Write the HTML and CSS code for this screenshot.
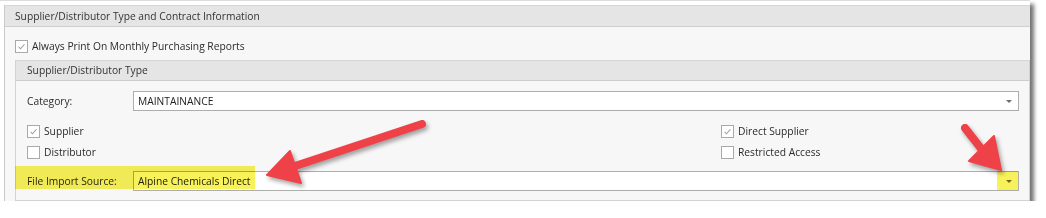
FILE: index.html
```html
<!DOCTYPE html>
<html>
<head>
<meta charset="utf-8">
<link rel="stylesheet" href="styles.css">
</head>
<body>
<div class="shot">
  <div class="topline"></div>
  <div class="panel">
    <div class="panel-head">Supplier/Distributor Type and Contract Information</div>
    <div class="panel-body">
      <div class="chk-row top-chk">
        <span class="chk checked"><svg viewBox="0 0 13 13"><path d="M3 6.8 L5.3 9.2 L10 3.8" fill="none" stroke="#9a9a9a" stroke-width="1.2"/></svg></span>
        <span class="chk-label">Always Print On Monthly Purchasing Reports</span>
      </div>
      <div class="group">
        <div class="group-head">Supplier/Distributor Type</div>
        <div class="group-body">
          <div class="field-row cat-row">
            <span class="field-label">Category:</span>
            <div class="combo"><span class="combo-text">MAINTAINANCE</span><span class="combo-btn"><span class="tri"></span></span></div>
          </div>
          <div class="chk-grid">
            <div class="chk-col">
              <div class="chk-row">
                <span class="chk checked"><svg viewBox="0 0 13 13"><path d="M3 6.8 L5.3 9.2 L10 3.8" fill="none" stroke="#9a9a9a" stroke-width="1.2"/></svg></span>
                <span class="chk-label">Supplier</span>
              </div>
              <div class="chk-row">
                <span class="chk"></span>
                <span class="chk-label">Distributor</span>
              </div>
            </div>
            <div class="chk-col">
              <div class="chk-row">
                <span class="chk checked"><svg viewBox="0 0 13 13"><path d="M3 6.8 L5.3 9.2 L10 3.8" fill="none" stroke="#9a9a9a" stroke-width="1.2"/></svg></span>
                <span class="chk-label">Direct Supplier</span>
              </div>
              <div class="chk-row">
                <span class="chk"></span>
                <span class="chk-label">Restricted Access</span>
              </div>
            </div>
          </div>
          <div class="field-row file-row">
            <span class="field-label">File Import Source:</span>
            <div class="combo"><span class="combo-text">Alpine Chemicals Direct</span><span class="combo-btn"><span class="tri"></span></span></div>
          </div>
        </div>
      </div>
    </div>
  </div>
  <div class="hl hl-label"></div>
  <div class="hl hl-btn"></div>
  <svg class="arrows" width="1046" height="218" viewBox="0 0 1046 218">
    <g class="arrow">
      <line x1="422" y1="124" x2="292" y2="167" stroke="#ef4248" stroke-width="8" stroke-linecap="round"/>
      <polygon points="267,175 290,151 301,183" fill="#ef4248" stroke="#ef4248" stroke-width="2" stroke-linejoin="round"/>
    </g>
    <g class="arrow">
      <line x1="965" y1="128" x2="983" y2="151" stroke="#ef4248" stroke-width="8" stroke-linecap="round"/>
      <polygon points="1001,170 969,161 994,136" fill="#ef4248" stroke="#ef4248" stroke-width="2" stroke-linejoin="round"/>
    </g>
  </svg>
</div>
</body>
</html>
```

FILE: styles.css
```css
html, body {
  margin: 0;
  padding: 0;
  background: #ffffff;
}
body {
  font-family: "Open Sans", "Noto Sans", "Liberation Sans", sans-serif;
  font-size: 10.25px;
  color: #2b2b2b;
}
.shot {
  position: relative;
  width: 1030px;
  height: 201px;
  background: #ffffff;
  box-shadow: 4px 4px 4px rgba(0, 0, 0, 0.55);
}
.topline {
  height: 1px;
  background: #dcdcdc;
  margin-bottom: 4px;
}
.panel {
  margin-left: 4px;
  border-left: 1px solid #cacaca;
  height: 196px;
  display: flex;
  flex-direction: column;
  background: #f7f7f7;
}
.panel-head {
  height: 20px;
  line-height: 20px;
  border-top: 1px solid #d6d6d6;
  border-bottom: 1px solid #d0d0d0;
  background: #e5e5e5;
  padding-left: 10px;
  color: #333;
  flex: none;
}
.panel-body {
  flex: 1;
  min-height: 0;
  padding-left: 10px;
  display: flex;
  flex-direction: column;
}
.chk-row {
  display: flex;
  align-items: center;
  height: 13px;
  gap: 4px;
}
.top-chk {
  margin-top: 13px;
  flex: none;
}
.chk {
  width: 11px;
  height: 11px;
  border: 1px solid #a9a9a9;
  background: #ffffff;
  display: inline-flex;
  flex: none;
}
.chk svg {
  width: 11px;
  height: 11px;
}
.chk-label {
  line-height: 13px;
  white-space: nowrap;
}
.group {
  margin-top: 7px;
  flex: 1;
  min-height: 0;
  border-left: 1px solid #d2d2d2;
  border-right: 1px solid #d2d2d2;
  border-bottom: 1px solid #d2d2d2;
  display: flex;
  flex-direction: column;
}
.group-head {
  height: 19px;
  line-height: 19px;
  border-top: 1px solid #d6d6d6;
  border-bottom: 1px solid #cccccc;
  background: #e5e5e5;
  padding-left: 11px;
  color: #333;
  flex: none;
}
.group-body {
  padding: 10px 10px 0 11px;
  display: flex;
  flex-direction: column;
}
.field-row {
  display: flex;
  align-items: center;
  height: 20px;
}
.field-label {
  width: 106px;
  flex: none;
}
.combo {
  flex: 1;
  height: 18px;
  border: 1px solid #adadad;
  background: #ffffff;
  display: flex;
  align-items: center;
}
.combo-text {
  flex: 1;
  padding-left: 4px;
  color: #222;
}
.combo-btn {
  width: 18px;
  height: 18px;
  display: flex;
  align-items: center;
  justify-content: center;
}
.tri {
  width: 0;
  height: 0;
  border-left: 3px solid transparent;
  border-right: 3px solid transparent;
  border-top: 3px solid #6e6e6e;
}
.chk-grid {
  margin-top: 14px;
  display: grid;
  grid-template-columns: 694px 1fr;
}
.chk-col {
  display: flex;
  flex-direction: column;
  gap: 8px;
}
.file-row {
  margin-top: 12px;
}
.hl {
  position: absolute;
  background: #f8f25a;
  mix-blend-mode: multiply;
}
.hl-label {
  left: 15px;
  top: 166px;
  width: 240px;
  height: 23px;
}
.hl-btn {
  left: 997px;
  top: 171px;
  width: 21px;
  height: 19px;
}
.arrows {
  position: absolute;
  left: 0;
  top: 0;
  pointer-events: none;
}
.arrow {
  filter: drop-shadow(2px 3px 2px rgba(0, 0, 0, 0.35));
}
```
